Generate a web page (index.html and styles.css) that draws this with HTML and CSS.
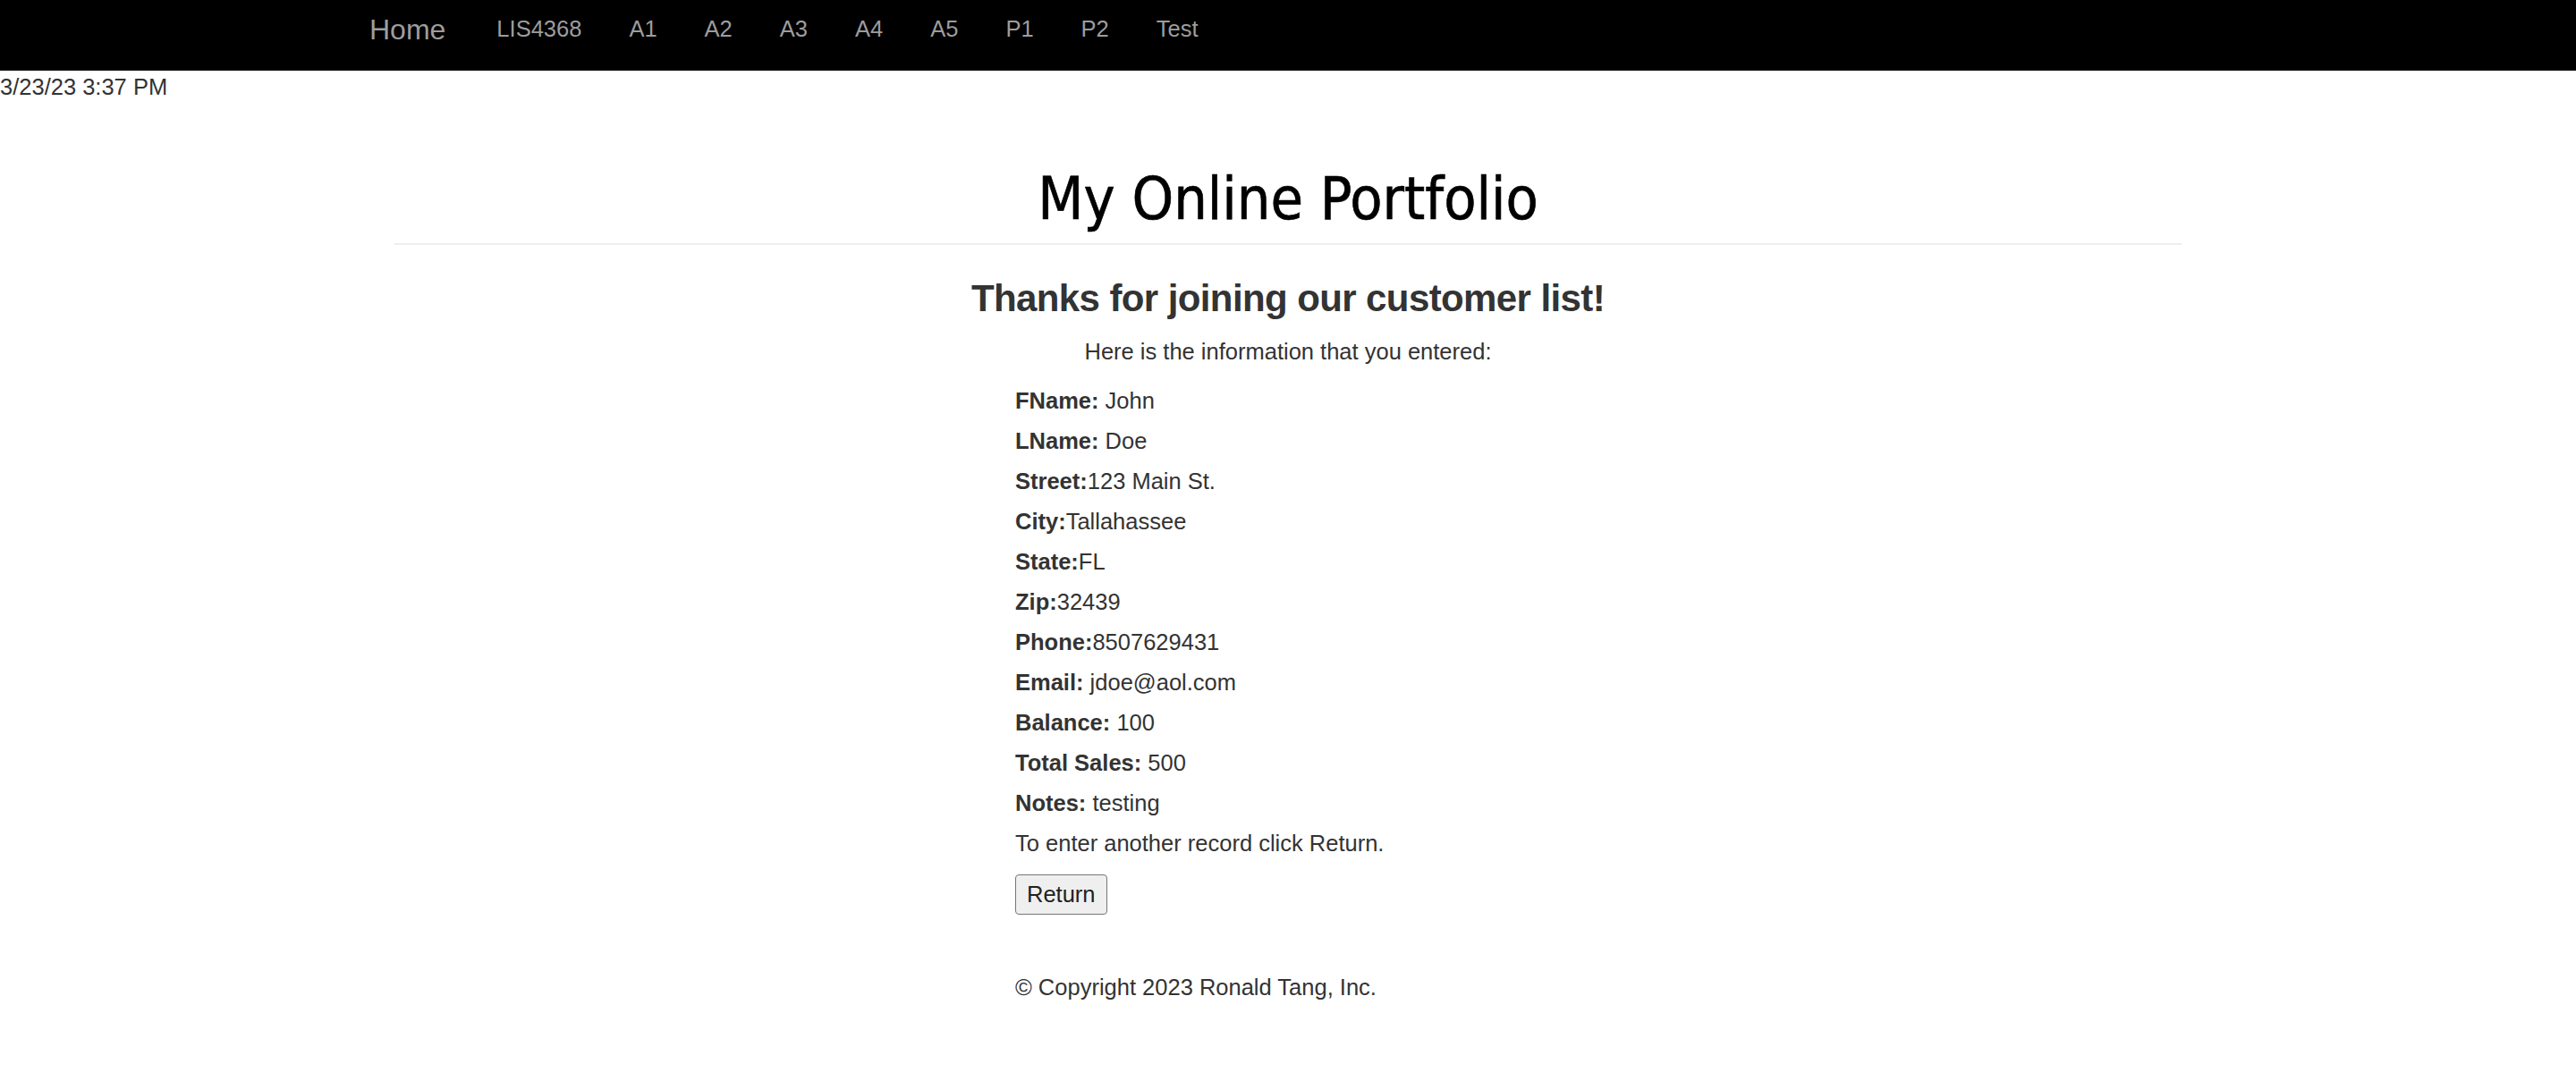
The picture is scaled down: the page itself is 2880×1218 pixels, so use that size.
FILE: index.html
```html
<!DOCTYPE html>
<html lang="en">
<head>
<meta charset="utf-8">
<title>My Online Portfolio</title>
<link rel="stylesheet" href="styles.css">
</head>
<body>
<nav class="navbar">
  <div class="nav-inner">
    <a class="brand" href="#">Home</a>
    <a class="nav-link" href="#">LIS4368</a>
    <a class="nav-link" href="#">A1</a>
    <a class="nav-link" href="#">A2</a>
    <a class="nav-link" href="#">A3</a>
    <a class="nav-link" href="#">A4</a>
    <a class="nav-link" href="#">A5</a>
    <a class="nav-link" href="#">P1</a>
    <a class="nav-link" href="#">P2</a>
    <a class="nav-link" href="#">Test</a>
  </div>
</nav>
<div class="timestamp">3/23/23 3:37 PM</div>
<main class="container">
  <h1 class="page-title">My Online Portfolio</h1>
  <div class="divider"></div>
  <h2 class="thanks">Thanks for joining our customer list!</h2>
  <p class="intro">Here is the information that you entered:</p>
  <div class="details">
    <div class="row"><b>FName:</b> John</div>
    <div class="row"><b>LName:</b> Doe</div>
    <div class="row"><b>Street:</b>123 Main St.</div>
    <div class="row"><b>City:</b>Tallahassee</div>
    <div class="row"><b>State:</b>FL</div>
    <div class="row"><b>Zip:</b>32439</div>
    <div class="row"><b>Phone:</b>8507629431</div>
    <div class="row"><b>Email:</b> jdoe@aol.com</div>
    <div class="row"><b>Balance:</b> 100</div>
    <div class="row"><b>Total Sales:</b> 500</div>
    <div class="row"><b>Notes:</b> testing</div>
    <div class="row">To enter another record click Return.</div>
    <button class="btn" type="button">Return</button>
    <footer class="copyright">© Copyright 2023 Ronald Tang, Inc.</footer>
  </div>
</main>
</body>
</html>
```
FILE: styles.css
```css
html, body {
  margin: 0;
  padding: 0;
  background: #fff;
}
body {
  font-family: "Liberation Sans", Arial, sans-serif;
  font-size: 25.5px;
  color: #333;
}
.navbar {
  background: #000;
  height: 79px;
}
.nav-inner {
  width: 2054px;
  margin: 0 auto;
  display: flex;
  align-items: flex-start;
  gap: 53px;
  padding-top: 17px;
}
.nav-inner a {
  text-decoration: none;
  color: #9d9d9d;
}
.brand {
  font-size: 32px;
  line-height: 32px;
  margin-right: 4px;
}
.nav-link {
  font-size: 25.5px;
  line-height: 25.5px;
  margin-top: 3px;
}
.timestamp {
  line-height: 37px;
}
.container {
  width: 1998px;
  margin: 0 auto;
}
.page-title {
  margin: 71px 0 0;
  font-family: "DejaVu Sans Condensed", "DejaVu Sans", sans-serif;
  font-stretch: condensed;
  font-weight: normal;
  font-size: 66px;
  line-height: 71px;
  color: #000;
  text-align: center;
  -webkit-text-stroke: 0.6px #000;
}
.divider {
  margin-top: 14px;
  border-top: 2px solid #eee;
}
.thanks {
  margin: 36px 0 0;
  font-size: 42px;
  line-height: 48px;
  font-weight: bold;
  letter-spacing: -0.6px;
  color: #333;
  text-align: center;
}
.intro {
  margin: 13px 0 0;
  line-height: 45px;
  text-align: center;
}
.details {
  width: 610px;
  margin: 10px auto 0;
}
.row {
  line-height: 45px;
}
.btn {
  display: block;
  margin-top: 12px;
  height: 45px;
  padding: 0 12px;
  font-family: "Liberation Sans", Arial, sans-serif;
  font-size: 25.5px;
  color: #222;
  background: #efefef;
  border: 1px solid #767676;
  border-radius: 4px;
}
.copyright {
  margin-top: 59px;
  line-height: 45px;
}
```
